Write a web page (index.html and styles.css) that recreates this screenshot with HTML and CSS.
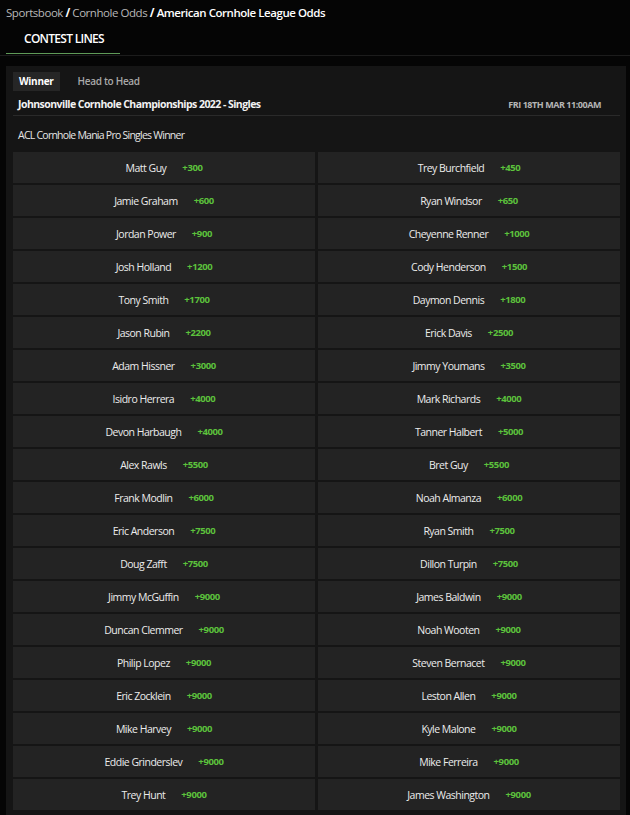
FILE: index.html
```html
<!DOCTYPE html>
<html lang="en">
<head>
<meta charset="utf-8">
<title>American Cornhole League Odds</title>
<link rel="stylesheet" href="styles.css">
</head>
<body>
<nav class="crumbs">
  <a class="crumb-link">Sportsbook</a><span class="sep"> / </span><a class="crumb-link">Cornhole Odds</a><span class="sep"> / </span><span class="crumb-current">American Cornhole League Odds</span>
</nav>
<div class="tabbar">
  <div class="tab active">CONTEST LINES</div>
</div>
<section class="panel">
  <div class="subtabs">
    <span class="subtab active">Winner</span>
    <span class="subtab">Head to Head</span>
  </div>
  <div class="event-head">
    <span class="event-title">Johnsonville Cornhole Championships 2022 - Singles</span>
    <span class="event-date">FRI 18TH MAR 11:00AM</span>
  </div>
  <div class="market">ACL Cornhole Mania Pro Singles Winner</div>
  <div class="grid">
    <div class="cell"><span class="name">Matt Guy</span><span class="odds">+300</span></div>
    <div class="cell"><span class="name">Trey Burchfield</span><span class="odds">+450</span></div>
    <div class="cell"><span class="name">Jamie Graham</span><span class="odds">+600</span></div>
    <div class="cell"><span class="name">Ryan Windsor</span><span class="odds">+650</span></div>
    <div class="cell"><span class="name">Jordan Power</span><span class="odds">+900</span></div>
    <div class="cell"><span class="name">Cheyenne Renner</span><span class="odds">+1000</span></div>
    <div class="cell"><span class="name">Josh Holland</span><span class="odds">+1200</span></div>
    <div class="cell"><span class="name">Cody Henderson</span><span class="odds">+1500</span></div>
    <div class="cell"><span class="name">Tony Smith</span><span class="odds">+1700</span></div>
    <div class="cell"><span class="name">Daymon Dennis</span><span class="odds">+1800</span></div>
    <div class="cell"><span class="name">Jason Rubin</span><span class="odds">+2200</span></div>
    <div class="cell"><span class="name">Erick Davis</span><span class="odds">+2500</span></div>
    <div class="cell"><span class="name">Adam Hissner</span><span class="odds">+3000</span></div>
    <div class="cell"><span class="name">Jimmy Youmans</span><span class="odds">+3500</span></div>
    <div class="cell"><span class="name">Isidro Herrera</span><span class="odds">+4000</span></div>
    <div class="cell"><span class="name">Mark Richards</span><span class="odds">+4000</span></div>
    <div class="cell"><span class="name">Devon Harbaugh</span><span class="odds">+4000</span></div>
    <div class="cell"><span class="name">Tanner Halbert</span><span class="odds">+5000</span></div>
    <div class="cell"><span class="name">Alex Rawls</span><span class="odds">+5500</span></div>
    <div class="cell"><span class="name">Bret Guy</span><span class="odds">+5500</span></div>
    <div class="cell"><span class="name">Frank Modlin</span><span class="odds">+6000</span></div>
    <div class="cell"><span class="name">Noah Almanza</span><span class="odds">+6000</span></div>
    <div class="cell"><span class="name">Eric Anderson</span><span class="odds">+7500</span></div>
    <div class="cell"><span class="name">Ryan Smith</span><span class="odds">+7500</span></div>
    <div class="cell"><span class="name">Doug Zafft</span><span class="odds">+7500</span></div>
    <div class="cell"><span class="name">Dillon Turpin</span><span class="odds">+7500</span></div>
    <div class="cell"><span class="name">Jimmy McGuffin</span><span class="odds">+9000</span></div>
    <div class="cell"><span class="name">James Baldwin</span><span class="odds">+9000</span></div>
    <div class="cell"><span class="name">Duncan Clemmer</span><span class="odds">+9000</span></div>
    <div class="cell"><span class="name">Noah Wooten</span><span class="odds">+9000</span></div>
    <div class="cell"><span class="name">Philip Lopez</span><span class="odds">+9000</span></div>
    <div class="cell"><span class="name">Steven Bernacet</span><span class="odds">+9000</span></div>
    <div class="cell"><span class="name">Eric Zocklein</span><span class="odds">+9000</span></div>
    <div class="cell"><span class="name">Leston Allen</span><span class="odds">+9000</span></div>
    <div class="cell"><span class="name">Mike Harvey</span><span class="odds">+9000</span></div>
    <div class="cell"><span class="name">Kyle Malone</span><span class="odds">+9000</span></div>
    <div class="cell"><span class="name">Eddie Grinderslev</span><span class="odds">+9000</span></div>
    <div class="cell"><span class="name">Mike Ferreira</span><span class="odds">+9000</span></div>
    <div class="cell"><span class="name">Trey Hunt</span><span class="odds">+9000</span></div>
    <div class="cell"><span class="name">James Washington</span><span class="odds">+9000</span></div>
  </div>
</section>
</body>
</html>
```

FILE: styles.css
```css
* { box-sizing: border-box; }

html, body {
  margin: 0;
  padding: 0;
  background: #050505;
  color: #e8e8e8;
  font-family: "Open Sans", "Noto Sans", sans-serif;
}

body {
  height: 815px;
  overflow: hidden;
}

.crumbs {
  padding: 5px 6px 0;
  height: 24px;
  font-size: 11.5px;
  line-height: 16px;
  letter-spacing: -0.45px;
  white-space: nowrap;
}

.crumb-link { color: #b8b8b8; }
.sep { color: #ffffff; font-weight: 700; }
.crumb-current { color: #ffffff; font-weight: 600; }

.tabbar {
  display: flex;
  padding-left: 6px;
  border-bottom: 1px solid #1c1c1c;
  padding-bottom: 1px;
}

.tab {
  width: 114px;
  height: 30px;
  padding: 7px 0 0 18px;
  font-size: 12px;
  line-height: 16px;
  font-weight: 600;
  letter-spacing: -0.72px;
  color: #ffffff;
  border-bottom: 1px solid #5f9a58;
}

.panel {
  margin: 10px 4px 0 6px;
  background: #151515;
  padding: 6px 6px 0 7px;
  height: 760px;
}

.subtabs {
  display: flex;
  gap: 12px;
  height: 19px;
}

.subtab {
  padding: 0 6px;
  height: 19px;
  font-size: 10px;
  line-height: 19px;
  font-weight: 600;
  letter-spacing: -0.3px;
  color: #a9a9a9;
}

.subtab.active {
  background: #262626;
  color: #ffffff;
  font-weight: 700;
}

.event-head {
  display: flex;
  justify-content: space-between;
  align-items: center;
  height: 25px;
  padding: 2px 19px 0 5px;
  border-bottom: 1px solid #2a2a2a;
}

.event-title {
  font-size: 10.5px;
  font-weight: 700;
  letter-spacing: -0.55px;
  color: #f2f2f2;
}

.event-date {
  font-size: 9px;
  font-weight: 700;
  letter-spacing: -0.45px;
  color: #b5b5b5;
}

.market {
  height: 36px;
  padding: 12px 0 0 5px;
  font-size: 10.5px;
  line-height: 15px;
  letter-spacing: -0.75px;
  color: #e6e6e6;
}

.grid {
  display: grid;
  grid-template-columns: 302px 302px;
  column-gap: 3px;
  row-gap: 2px;
}

.cell {
  height: 31px;
  background: #232323;
  display: flex;
  justify-content: center;
  align-items: center;
  gap: 16px;
}

.name {
  font-size: 10.5px;
  letter-spacing: -0.5px;
  color: #ececec;
}

.odds {
  font-size: 9.5px;
  font-weight: 700;
  letter-spacing: -0.4px;
  color: #5cc23c;
}
```
